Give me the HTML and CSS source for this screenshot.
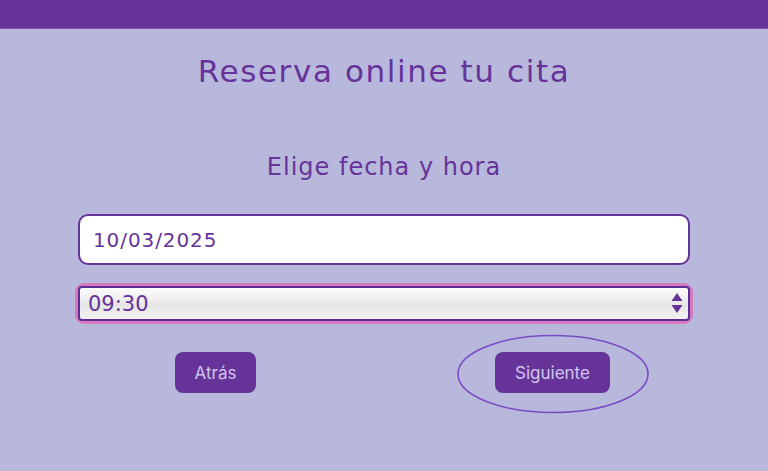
FILE: index.html
```html
<!DOCTYPE html>
<html lang="es">
<head>
    <meta charset="UTF-8">
    <meta name="viewport" content="width=device-width, initial-scale=1.0">
    <title>Reserva online tu cita</title>
    <link rel="stylesheet" href="styles.css">
</head>
<body>
    <div class="top-bar"></div>

    <div class="page">
        <h1 class="title">Reserva online tu cita</h1>

        <div class="step">
            <h2 class="step-title">Elige fecha y hora</h2>

            <div class="form">
                <input class="date-input" type="text" value="10/03/2025">

                <div class="select-wrap">
                    <select class="time-select">
                        <option>09:30</option>
                        <option>10:00</option>
                        <option>10:30</option>
                    </select>
                    <svg class="select-arrows" width="12" height="22" viewBox="0 0 12 22">
                        <path d="M6 1 L11.5 9 L0.5 9 Z" fill="#663399"/>
                        <path d="M6 21 L11.5 13 L0.5 13 Z" fill="#663399"/>
                    </svg>
                </div>
            </div>

            <div class="actions">
                <div class="action-cell">
                    <button class="btn">Atrás</button>
                </div>
                <div class="action-cell">
                    <button class="btn">Siguiente</button>
                    <!-- marca a mano alrededor del botón -->
                    <svg class="ring" width="194" height="80" viewBox="0 0 194 80">
                        <ellipse cx="96" cy="40" rx="95" ry="38.5" fill="none" stroke="#7a4cc4" stroke-width="1.6"/>
                    </svg>
                </div>
            </div>
        </div>
    </div>
</body>
</html>
```

FILE: styles.css
```css
* {
    margin: 0;
    padding: 0;
    box-sizing: border-box;
}

body {
    background-color: #b8b8dd;
    font-family: 'DejaVu Sans', sans-serif;
    color: #663399;
    min-height: 100vh;
}

.top-bar {
    height: 29px;
    background-color: #663399;
    border-bottom: 1px solid #7b52b0;
}

.page {
    text-align: center;
}

.title {
    font-weight: normal;
    font-size: 31px;
    letter-spacing: 1.6px;
    line-height: 40px;
    margin-top: 22px;
}

.step {
    margin-top: 60px;
}

.step-title {
    font-weight: normal;
    font-size: 24px;
    letter-spacing: 1px;
    line-height: 32px;
}

.form {
    width: 612px;
    margin: 31px auto 0;
    display: flex;
    flex-direction: column;
    gap: 21px;
}

.date-input {
    width: 100%;
    height: 51px;
    border: 2px solid #663399;
    border-radius: 10px;
    background: #fff;
    padding: 0 13px;
    font-family: 'DejaVu Sans', sans-serif;
    font-size: 20px;
    letter-spacing: 0.9px;
    color: #663399;
    outline: none;
}

.select-wrap {
    position: relative;
    border-radius: 6px;
    box-shadow: 0 0 0 3px #d57bbd;
}

.time-select {
    appearance: none;
    -webkit-appearance: none;
    display: block;
    width: 100%;
    height: 35px;
    border: 2px solid #5b2e99;
    border-radius: 4px;
    background: linear-gradient(to bottom, #fcfcfc 0%, #e6e6e6 55%, #f2f2f2 100%);
    padding: 0 8px;
    font-family: 'DejaVu Sans', sans-serif;
    font-size: 21px;
    color: #663399;
    outline: none;
}

.select-arrows {
    position: absolute;
    right: 7px;
    top: 6px;
    pointer-events: none;
}

.actions {
    width: 674px;
    margin: 31px auto 0;
    display: grid;
    grid-template-columns: 1fr 1fr;
}

.action-cell {
    position: relative;
    display: flex;
    justify-content: center;
}

.btn {
    background-color: #663399;
    color: #cfc6ee;
    border: none;
    border-radius: 8px;
    height: 41px;
    padding: 0 20px;
    font-family: 'Inter', sans-serif;
    font-size: 17px;
    cursor: pointer;
}

.ring {
    position: absolute;
    left: 73px;
    top: -18px;
    pointer-events: none;
}
```
